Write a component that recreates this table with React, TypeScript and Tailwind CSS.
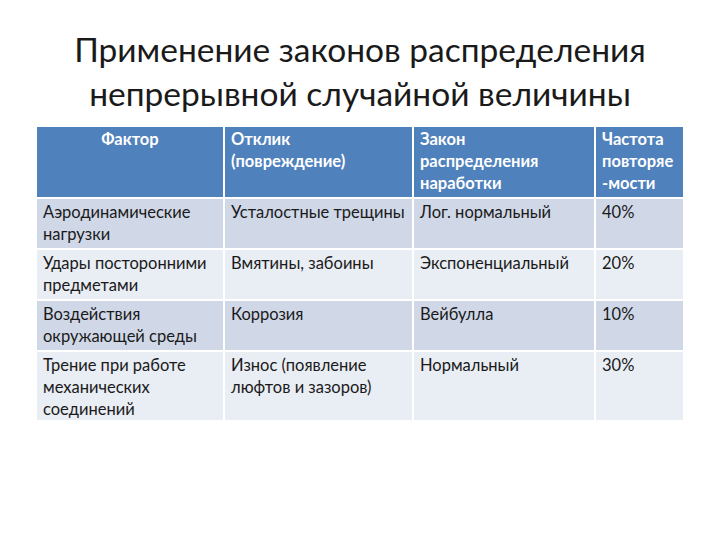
const rows = [
  { factor: ['Аэродинамические', 'нагрузки'], response: ['Усталостные трещины'], law: 'Лог. нормальный', freq: '40%' },
  { factor: ['Удары посторонними', 'предметами'], response: ['Вмятины, забоины'], law: 'Экспоненциальный', freq: '20%' },
  { factor: ['Воздействия', 'окружающей среды'], response: ['Коррозия'], law: 'Вейбулла', freq: '10%' },
  { factor: ['Трение при работе', 'механических', 'соединений'], response: ['Износ (появление', 'люфтов и зазоров)'], law: 'Нормальный', freq: '30%' },
]

function Lines({ items }: { items: string[] }) {
  return (
    <>
      {items.map((t, i) => (
        <div key={i} className="whitespace-nowrap">
          {t}
        </div>
      ))}
    </>
  )
}

export default function App() {
  return (
    <div className="w-[720px] h-[540px] bg-white font-['Lato','Open_Sans',sans-serif] text-[#1a1a1a]">
      {/* title */}
      <h1 className="pt-[27px] text-center text-[33.5px] leading-[44px] font-normal text-[#1a1a1a]">
        Применение законов распределения
        <br />
        непрерывной случайной величины
      </h1>

      {/* table */}
      <div className="mt-[12px] ml-[37px] w-[646px] grid grid-cols-[188px_189px_182px_87px] text-[16.5px] leading-[22px]">
        {/* header */}
        <div className="h-[70px] bg-[#4f81bd] text-white font-bold text-center pt-[1px] border-r-2 border-white">
          Фактор
        </div>
        <div className="h-[70px] bg-[#4f81bd] text-white font-bold px-[6px] pt-[1px] border-r-2 border-white">
          <Lines items={['Отклик', '(повреждение)']} />
        </div>
        <div className="h-[70px] bg-[#4f81bd] text-white font-bold px-[6px] pt-[1px] border-r-2 border-white">
          <Lines items={['Закон', 'распределения', 'наработки']} />
        </div>
        <div className="h-[70px] bg-[#4f81bd] text-white font-bold px-[6px] pt-[1px]">
          <Lines items={['Частота', 'повторяе', '-мости']} />
        </div>

        {rows.map((r, i) => {
          const bg = i % 2 === 0 ? 'bg-[#d0d8e8]' : 'bg-[#e9edf4]'
          const h = i === 3 ? 'h-[70px]' : 'h-[51px]'
          return [
            <div key={`${i}a`} className={`${bg} ${h} px-[6px] pt-[2px] border-t-2 border-r-2 border-white`}>
              <Lines items={r.factor} />
            </div>,
            <div key={`${i}b`} className={`${bg} ${h} px-[6px] pt-[2px] border-t-2 border-r-2 border-white`}>
              <Lines items={r.response} />
            </div>,
            <div key={`${i}c`} className={`${bg} ${h} px-[6px] pt-[2px] border-t-2 border-r-2 border-white`}>
              {r.law}
            </div>,
            <div key={`${i}d`} className={`${bg} ${h} px-[6px] pt-[2px] border-t-2 border-white`}>
              {r.freq}
            </div>,
          ]
        })}
      </div>
    </div>
  )
}
